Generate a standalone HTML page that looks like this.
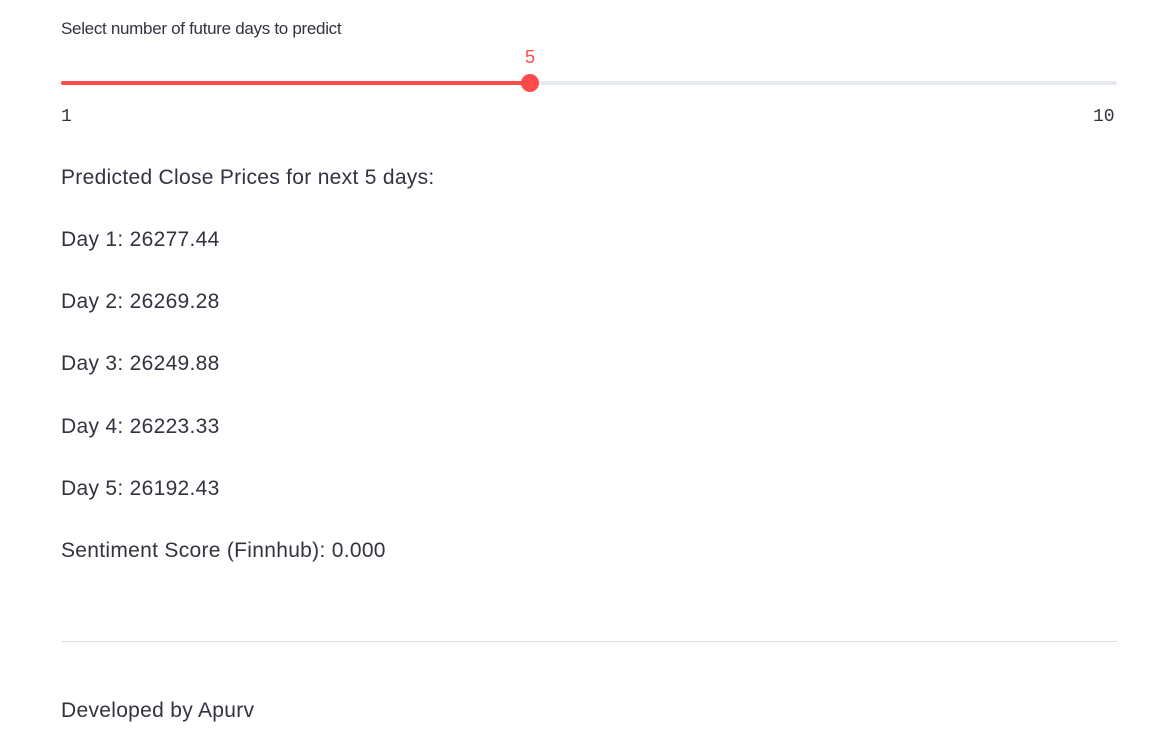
<!DOCTYPE html>
<html><head><style>
body{margin:0;background:#fff;width:1152px;height:748px;overflow:hidden;font-family:"Liberation Sans",sans-serif;color:#31333F;position:relative}
.t{position:absolute;left:61px;white-space:nowrap;line-height:1}
.p{font-size:21px;letter-spacing:0.3px}
</style></head><body>
<div class="t" style="top:20px;font-size:17px;letter-spacing:-0.3px">Select number of future days to predict</div>
<div class="t" style="left:525px;top:48px;font-size:18px;color:#ff4b4b">5</div>
<div style="position:absolute;left:61px;top:81px;width:1056px;height:4px;border-radius:2px;background:#e6e9ef"></div>
<div style="position:absolute;left:61px;top:81px;width:469px;height:4px;border-radius:2px;background:#ff4b4b"></div>
<div style="position:absolute;left:521px;top:74px;width:18px;height:18px;border-radius:50%;background:#ff4b4b"></div>
<div class="t" style="top:108px;font-family:'Liberation Mono',monospace;font-size:18px">1</div>
<div class="t" style="left:1093px;top:108px;font-family:'Liberation Mono',monospace;font-size:18px">10</div>
<div class="t p" style="top:167px">Predicted Close Prices for next 5 days:</div>
<div class="t p" style="top:229px">Day 1: 26277.44</div>
<div class="t p" style="top:291px">Day 2: 26269.28</div>
<div class="t p" style="top:353px">Day 3: 26249.88</div>
<div class="t p" style="top:416px">Day 4: 26223.33</div>
<div class="t p" style="top:478px">Day 5: 26192.43</div>
<div class="t p" style="top:540px">Sentiment Score (Finnhub): 0.000</div>
<div style="position:absolute;left:61px;top:641px;width:1056px;height:1px;background:#dcdcdf"></div>
<div class="t p" style="top:700px">Developed by Apurv</div>
</body></html>
